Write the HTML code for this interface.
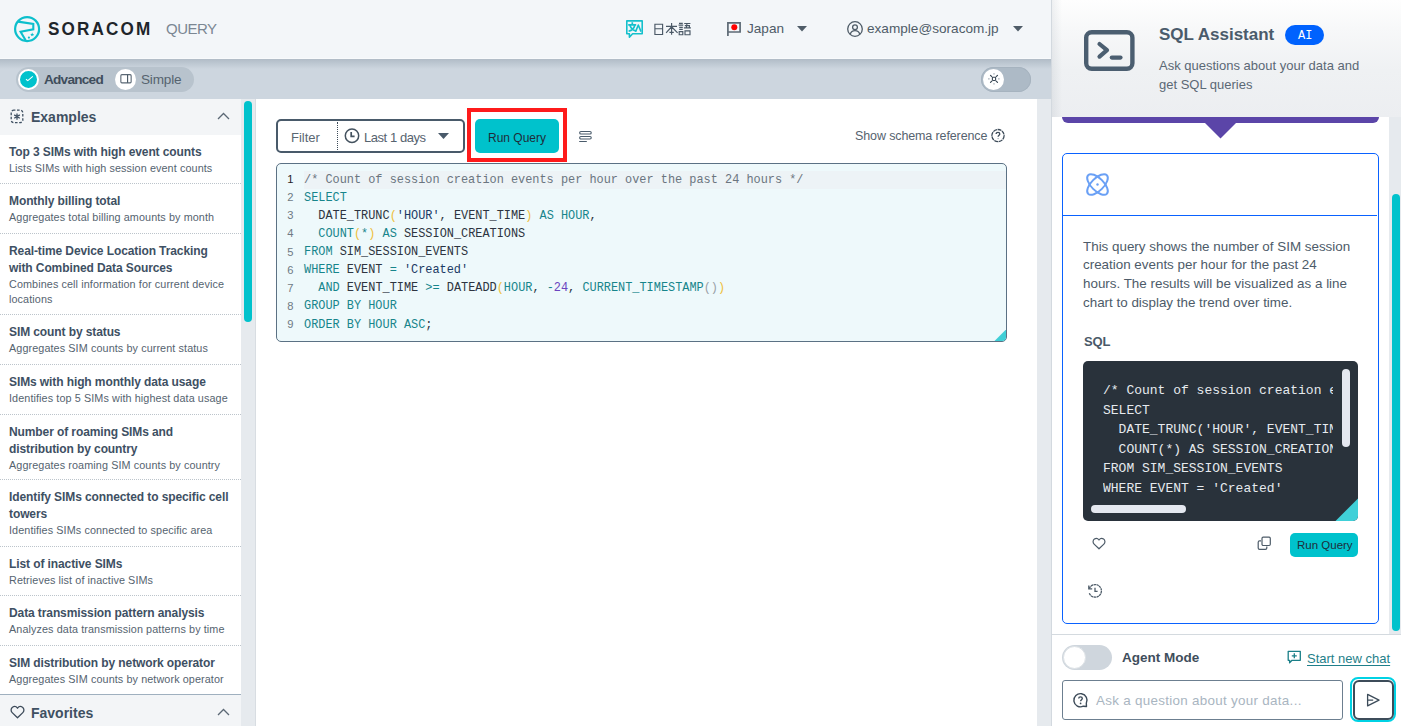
<!DOCTYPE html>
<html><head><meta charset="utf-8">
<style>
*{box-sizing:border-box;margin:0;padding:0}
html,body{width:1401px;height:726px;overflow:hidden;background:#fff;font-family:"Liberation Sans",sans-serif;color:#3d4b59}
.abs{position:absolute}
.nw{white-space:nowrap}
#header{position:absolute;left:0;top:0;width:1051px;height:59px;background:#f3f6f9;z-index:3;border-bottom:1px solid #f8fafc}
#toolbar{position:absolute;left:0;top:58px;width:1051px;height:41px;background:#cdd6df;z-index:2}
#sidebar{position:absolute;left:0;top:99px;width:241px;height:627px;background:#fff;overflow:hidden}
#gutter{position:absolute;left:241px;top:99px;width:14px;height:627px;background:#e6eaee}
#main{position:absolute;left:255px;top:99px;width:782px;height:627px;background:#fff}
#strip{position:absolute;left:1037px;top:99px;width:14px;height:627px;background:#e6eaee}
#right{position:absolute;left:1051px;top:0;width:350px;height:726px;background:#fff;z-index:4;}
.sechead{position:absolute;left:0;width:241px;background:#f3f5f7}
.sechead .t{position:absolute;left:31px;font-size:14px;font-weight:bold;color:#3f5062;line-height:16px}
.item{position:absolute;left:0;width:241px;padding:8.5px 0 0 9px;border-bottom:1px dotted #bcc4cb}
.item .ti{font-size:12px;font-weight:bold;color:#3e5063;white-space:nowrap;line-height:17px;letter-spacing:-0.1px}
.item .de{font-size:10.8px;color:#55636f;white-space:nowrap;line-height:15px;letter-spacing:0.1px}
.mono{font-family:"Liberation Mono",monospace}
#code{position:absolute;left:276px;top:163px;width:731px;height:179px;background:#eef9fb;border:1px solid #5b7184;border-radius:5px;overflow:hidden}
#code .ln{position:absolute;left:0;width:16.5px;text-align:right;font-family:"Liberation Sans",sans-serif;font-size:11.2px;color:#6f7a84}
#code .cl{position:absolute;left:27px;font-family:"Liberation Mono",monospace;font-size:11.9px;color:#2d3440;white-space:pre}
.k{color:#17858b}.s{color:#1b3a64}.p{color:#efc03a}.n{color:#6b45c0}.g{color:#9aa1a8}.c{color:#6b757f}
#dark{position:absolute;left:32px;top:361px;width:275px;height:160px;background:#29323b;border-radius:5px;overflow:hidden}
#dark pre{position:absolute;left:20px;top:20px;width:230px;overflow:hidden;font-family:"Liberation Mono",monospace;font-size:13px;line-height:19.5px;color:#e6eaee}
</style></head>
<body>

<div id="header">
  <svg class="abs" style="left:12px;top:14px" width="30" height="30" viewBox="0 0 30 30">
    <circle cx="15.1" cy="15.1" r="12" fill="none" stroke="#0cbfcc" stroke-width="2.2"/>
    <path d="M6 7.6 L21.3 9.9 V15.3 L8.6 17.8 L13.6 26.2" fill="none" stroke="#0cbfcc" stroke-width="2.1" stroke-linejoin="miter"/>
    <path d="M20.2 18.6 l.6 1.3 1.4 .1 -1.1 .9 .4 1.4 -1.3 -.8 -1.3 .8 .4 -1.4 -1.1 -.9 1.4 -.1z" fill="#0cbfcc"/>
    <circle cx="16.9" cy="23.6" r="1.1" fill="#0cbfcc"/>
  </svg>
  <div class="abs nw" style="left:48px;top:18px;font-size:19px;font-weight:bold;letter-spacing:2.4px;color:#1e252b;transform:scaleX(0.9);transform-origin:0 0">SORACOM</div>
  <div class="abs nw" style="left:166px;top:20px;font-size:15px;color:#7b8793;letter-spacing:-0.5px">QUERY</div>

  <!-- translate icon -->
  <svg class="abs" style="left:625px;top:19px" width="20" height="20" viewBox="0 0 20 20">
    <path d="M1.8 1.9 H17.2 V14.8 H7.6 L4.4 18.2 V14.8 H1.8 Z" fill="none" stroke="#14c0cc" stroke-width="1.6" stroke-linejoin="round"/>
    <path d="M7.3 3.2 V5.6 M3.2 5.8 H11.2 M9.8 6.2 C9 9.6 6.6 11.4 3.6 12.2 M5 6.6 C6 9.6 8.4 11.4 11.2 12.1" fill="none" stroke="#14c0cc" stroke-width="1.7"/>
    <path d="M10.6 12.6 L13.3 6 L16 12.6" fill="none" stroke="#14c0cc" stroke-width="1.6" stroke-linejoin="round"/>
  </svg>
  <svg class="abs" style="left:653px;top:22px" width="39" height="14" viewBox="0 0 39 14">
    <g fill="none" stroke="#4a5866" stroke-width="1.15">
      <path d="M1.9 2.2 H9.6 V12.5 H1.9 Z M1.9 6.7 H9.6"/>
      <path d="M13 4.4 H24 M18.6 1.1 V12.7 M18.4 5 L13.1 10.8 M18.8 5 L24.6 10.8 M16.4 10.3 H20.8"/>
      <path d="M26 1.4 H29.8 M25.6 3.1 H30.2 M26.2 5.3 H29.8 M26.2 7.4 H29.8 M26.2 9.6 H29.8 V12.7 H26.2 Z"/>
      <path d="M31.2 1.5 H37.4 M34 1.5 L33.3 5.8 M31.8 3.6 H36.4 V5.8 M30.9 5.8 H37.9 M32 8.9 H37 V12.7 H32 Z"/>
    </g>
  </svg>
  <!-- flag -->
  <svg class="abs" style="left:726px;top:21px" width="16" height="17" viewBox="0 0 16 17">
    <path d="M1.9 15 V1.8 H14.1 V11 H1.9" fill="none" stroke="#5d6a76" stroke-width="1.7"/>
    <circle cx="8.3" cy="6.2" r="3" fill="#f00"/>
  </svg>
  <div class="abs nw" style="left:747px;top:21px;font-size:13.6px;color:#4f5c68">Japan</div>
  <svg class="abs" style="left:796px;top:26px" width="12" height="6" viewBox="0 0 12 6"><path d="M1 0 H11 L6 5.6Z" fill="#4f5c68"/></svg>
  <!-- user -->
  <svg class="abs" style="left:846px;top:20px" width="18" height="18" viewBox="0 0 18 18">
    <circle cx="9" cy="9" r="7.3" fill="none" stroke="#4f5c68" stroke-width="1.3"/>
    <circle cx="9" cy="7.2" r="2.4" fill="none" stroke="#4f5c68" stroke-width="1.3"/>
    <path d="M4.2 14.3 C5 11.6 6.7 10.6 9 10.6 C11.3 10.6 13 11.6 13.8 14.3" fill="none" stroke="#4f5c68" stroke-width="1.3"/>
  </svg>
  <div class="abs nw" style="left:867px;top:21px;font-size:13.6px;color:#4f5c68">example@soracom.jp</div>
  <svg class="abs" style="left:1012px;top:26px" width="12" height="6" viewBox="0 0 12 6"><path d="M1 0 H11 L6 5.6Z" fill="#4f5c68"/></svg>
</div>

<div id="toolbar">
  <div class="abs" style="left:0;top:1px;width:1051px;height:10px;background:linear-gradient(#b1bcc7,#cdd6df)"></div>
  <div class="abs" style="left:16px;top:9px;width:178px;height:25px;border-radius:13px;background:#b8c3cd"></div>
  <div class="abs" style="left:18px;top:10.5px;width:21px;height:21px;border-radius:50%;background:#00c2cc;border:2px solid #fff"></div>
  <svg class="abs" style="left:22px;top:15px" width="13" height="13" viewBox="0 0 13 13"><path d="M4 6.3 L5.8 7.6 L10.8 3.4" fill="none" stroke="#fff" stroke-width="1.1"/></svg>
  <div class="abs nw" style="left:44px;top:14px;font-size:13.6px;font-weight:bold;color:#3f4e5c;letter-spacing:-0.75px">Advanced</div>
  <div class="abs" style="left:115px;top:11px;width:21px;height:21px;border-radius:50%;background:#fff"></div>
  <svg class="abs" style="left:118px;top:14px" width="15" height="15" viewBox="0 0 15 15"><rect x="2.85" y="2.65" width="10.3" height="8.2" rx="1" fill="none" stroke="#5b6875" stroke-width="1.1"/><path d="M9.6 2.65 V10.85" stroke="#44525f" stroke-width="1.1"/></svg>
  <div class="abs nw" style="left:141px;top:14px;font-size:13.6px;color:#56636f;letter-spacing:-0.2px">Simple</div>
  <!-- dark mode toggle -->
  <div class="abs" style="left:981px;top:9px;width:50px;height:25px;border-radius:13px;background:#adbac6;box-shadow:inset 0 0 0 1px #a6b3bf"></div>
  <div class="abs" style="left:983px;top:11px;width:21px;height:21px;border-radius:50%;background:#fff"></div>
  <svg class="abs" style="left:986px;top:13px" width="16" height="16" viewBox="0 0 16 16"><g fill="none" stroke="#3c4a57" stroke-width="1.1"><rect x="6.4" y="6.3" width="3.2" height="3.2" rx=".8"/></g><g fill="none" stroke="#3c4a57" stroke-width="1.2" stroke-linecap="round"><path d="M4.5 4.4L5.8 5.7M11.5 4.4L10.2 5.7M4.5 11.4L5.8 10.1M11.5 11.4L10.2 10.1"/></g><g fill="none" stroke="#8a96a1" stroke-width="1.1"><path d="M8 2.3V3.5M8 12.3V13.5M2.3 7.9H3.5M12.3 7.9H13.5"/></g></svg>
</div>

<div id="sidebar">
  <div class="sechead" style="top:0;height:36px">
    <svg class="abs" style="left:10px;top:10px" width="14" height="15" viewBox="0 0 14 15"><rect x="1.2" y="1.2" width="11.6" height="12.4" rx="2.6" fill="none" stroke="#3f5062" stroke-width="1.3" stroke-dasharray="2.6 1.6" stroke-dashoffset="1"/><path d="M7 4.4V10.8M4.2 5.9L9.8 9.3M9.8 5.9L4.2 9.3" stroke="#3f5062" stroke-width="1.3"/></svg>
    <div class="t" style="top:10px">Examples</div>
    <svg class="abs" style="left:217px;top:13px" width="13" height="8" viewBox="0 0 13 8"><path d="M1 7 L6.5 1.5 L12 7" fill="none" stroke="#5b6875" stroke-width="1.3"/></svg>
  </div>
  <div class="item" style="top:36px;height:49px"><div class="ti">Top 3 SIMs with high event counts</div><div class="de">Lists SIMs with high session event counts</div></div>
  <div class="item" style="top:85px;height:50px"><div class="ti">Monthly billing total</div><div class="de">Aggregates total billing amounts by month</div></div>
  <div class="item" style="top:135px;height:81px"><div class="ti">Real-time Device Location Tracking<br>with Combined Data Sources</div><div class="de">Combines cell information for current device<br>locations</div></div>
  <div class="item" style="top:216px;height:50px"><div class="ti">SIM count by status</div><div class="de">Aggregates SIM counts by current status</div></div>
  <div class="item" style="top:266px;height:50px"><div class="ti">SIMs with high monthly data usage</div><div class="de">Identifies top 5 SIMs with highest data usage</div></div>
  <div class="item" style="top:316px;height:65px"><div class="ti">Number of roaming SIMs and<br>distribution by country</div><div class="de">Aggregates roaming SIM counts by country</div></div>
  <div class="item" style="top:381px;height:67px"><div class="ti">Identify SIMs connected to specific cell<br>towers</div><div class="de">Identifies SIMs connected to specific area</div></div>
  <div class="item" style="top:448px;height:49px"><div class="ti">List of inactive SIMs</div><div class="de">Retrieves list of inactive SIMs</div></div>
  <div class="item" style="top:497px;height:50px"><div class="ti">Data transmission pattern analysis</div><div class="de">Analyzes data transmission patterns by time</div></div>
  <div class="item" style="top:547px;height:49px;border-bottom:1px solid #9fb0bf"><div class="ti">SIM distribution by network operator</div><div class="de">Aggregates SIM counts by network operator</div></div>
  <div class="sechead" style="top:596px;height:31px">
    <svg class="abs" style="left:10px;top:10px" width="15" height="14" viewBox="0 0 15 14"><path d="M7.5 12.8 L2.2 7.6 C0.6 6 0.8 3.4 2.5 2.2 C4.1 1.1 6.3 1.5 7.5 3.2 C8.7 1.5 10.9 1.1 12.5 2.2 C14.2 3.4 14.4 6 12.8 7.6 Z" fill="none" stroke="#3d4b5a" stroke-width="1.3" stroke-linejoin="round"/></svg>
    <div class="t" style="top:10px">Favorites</div>
    <svg class="abs" style="left:217px;top:13px" width="13" height="8" viewBox="0 0 13 8"><path d="M1 7 L6.5 1.5 L12 7" fill="none" stroke="#5b6875" stroke-width="1.3"/></svg>
  </div>
</div>
<div id="gutter"><div class="abs" style="left:3px;top:2px;width:8px;height:221px;border-radius:4px;background:#00c2cc"></div></div>

<div id="main">
  <div class="abs" style="left:0;top:0;width:1px;height:627px;background:#d8dde2"></div>
  <!-- filter group -->
  <div class="abs" style="left:21px;top:20px;width:189px;height:34px;border:2px solid #495a6a;border-radius:5px"></div>
  <div class="abs nw" style="left:36px;top:31px;font-size:13px;color:#5a6773">Filter</div>
  <div class="abs" style="left:82px;top:23px;width:0;height:28px;border-left:1px dotted #3d4b59"></div>
  <svg class="abs" style="left:89px;top:29px" width="16" height="16" viewBox="0 0 16 16"><circle cx="8" cy="7.8" r="6.7" fill="none" stroke="#44525f" stroke-width="1.5"/><path d="M7.2 3.9 V8.4 H10.6" fill="none" stroke="#44525f" stroke-width="1.7"/></svg>
  <div class="abs nw" style="left:109px;top:31px;font-size:13px;color:#56636f;letter-spacing:-0.45px">Last 1 days</div>
  <svg class="abs" style="left:183px;top:34px" width="11" height="6" viewBox="0 0 11 6"><path d="M0 0 H11 L5.5 6Z" fill="#495a6a"/></svg>
  <!-- red highlight -->
  <div class="abs" style="left:212px;top:9px;width:100px;height:54px;border:4px solid #fe1b1b"></div>
  <div class="abs" style="left:220px;top:20px;width:84px;height:34px;border-radius:5px;background:#00c2cc"></div>
  <div class="abs nw" style="left:233px;top:32px;font-size:12px;color:#1f2d3a">Run Query</div>
  <svg class="abs" style="left:323px;top:31px" width="15" height="14" viewBox="0 0 15 14"><g fill="none" stroke="#4a5b6b" stroke-width="1.1"><rect x="1.65" y="1.45" width="11.6" height="2.6" rx="1.3"/><rect x="1.65" y="6.45" width="11.6" height="2.5" rx="1.25"/></g><path d="M1.6 11.45 H8.4" stroke="#4a5b6b" stroke-width="1.1" stroke-linecap="round"/></svg>
  <div class="abs nw" style="left:600px;top:30px;font-size:12.5px;color:#56636f;letter-spacing:-0.12px">Show schema reference</div>
  <svg class="abs" style="left:735px;top:29px" width="16" height="16" viewBox="0 0 16 16"><circle cx="8" cy="7.6" r="6.1" fill="none" stroke="#3d4b59" stroke-width="1.3" stroke-dasharray="4 .6"/><path d="M6.1 6.1 C6.1 5 6.9 4.4 8 4.4 C9.1 4.4 9.8 5.1 9.8 6 C9.8 7.1 8.1 7.3 8.1 8.8" fill="none" stroke="#3d4b59" stroke-width="1.3"/><circle cx="8.1" cy="10.6" r=".6" fill="#8592a0"/></svg>
</div>
<div id="code">
  <div class="abs" style="left:27px;top:7px;width:703px;height:17.5px;background:#edf3f6"></div>
  <div class="ln" style="top:9.0px;color:#1f2328">1</div>
  <div class="ln" style="top:27.1px">2</div>
  <div class="ln" style="top:45.2px">3</div>
  <div class="ln" style="top:63.4px">4</div>
  <div class="ln" style="top:81.5px">5</div>
  <div class="ln" style="top:99.6px">6</div>
  <div class="ln" style="top:117.7px">7</div>
  <div class="ln" style="top:135.8px">8</div>
  <div class="ln" style="top:154.0px">9</div>
  <div class="cl" style="top:8.5px"><span class="c">/* Count of session creation events per hour over the past 24 hours */</span></div>
  <div class="cl" style="top:26.6px"><span class="k">SELECT</span></div>
  <div class="cl" style="top:44.7px">  DATE_TRUNC<span class="p">(</span><span class="s">'HOUR'</span>, EVENT_TIME<span class="p">)</span> <span class="k">AS</span> <span class="k">HOUR</span>,</div>
  <div class="cl" style="top:62.9px">  <span class="k">COUNT</span><span class="p">(</span><span class="k">*</span><span class="p">)</span> <span class="k">AS</span> SESSION_CREATIONS</div>
  <div class="cl" style="top:81.0px"><span class="k">FROM</span> SIM_SESSION_EVENTS</div>
  <div class="cl" style="top:99.1px"><span class="k">WHERE</span> EVENT <span class="k">=</span> <span class="s">'Created'</span></div>
  <div class="cl" style="top:117.2px">  <span class="k">AND</span> EVENT_TIME <span class="k">&gt;=</span> DATEADD<span class="p">(</span><span class="k">HOUR</span>, <span class="k">-</span><span class="n">24</span>, <span class="k">CURRENT_TIMESTAMP</span><span class="g">()</span><span class="p">)</span></div>
  <div class="cl" style="top:135.3px"><span class="k">GROUP BY HOUR</span></div>
  <div class="cl" style="top:153.5px"><span class="k">ORDER BY HOUR ASC</span>;</div>
  <svg class="abs" style="right:-1px;bottom:-1px" width="15" height="15" viewBox="0 0 15 15"><path d="M15 1.5 V15 H1.5 Z" fill="#3fcfd6"/></svg>
</div>
<div id="strip"></div>
<div id="right">
  <div class="abs" style="left:0;top:0;width:1px;height:726px;background:#d3d9df;z-index:5"></div>
  <div class="abs" style="left:0;top:0;width:350px;height:117px;background:linear-gradient(#fefefe 0%,#f7f8f9 25%,#eff1f3 60%,#eceef1 100%)"></div>
  <div class="abs" style="left:1px;top:0;width:10px;height:117px;background:linear-gradient(to right,rgba(40,60,80,.07),rgba(40,60,80,0))"></div>
  <svg class="abs" style="left:32px;top:29px" width="53" height="43" viewBox="0 0 53 43"><rect x="3.2" y="3.2" width="46.2" height="36.6" rx="5.5" fill="none" stroke="#4b5e70" stroke-width="4.4"/><path d="M16.5 15 L24 21.2 L16.5 27.6" fill="none" stroke="#4b5e70" stroke-width="4.2" stroke-linecap="round" stroke-linejoin="round"/><path d="M28.8 28.6 H37.5" fill="none" stroke="#4b5e70" stroke-width="4.2" stroke-linecap="round"/></svg>
  <div class="abs nw" style="left:108px;top:25px;font-size:17px;font-weight:bold;color:#4a5b6b">SQL Assistant</div>
  <div class="abs" style="left:234px;top:25px;width:39px;height:20px;border-radius:10px;background:#0062fe"></div>
  <div class="abs nw mono" style="left:247px;top:28.5px;font-size:12px;color:#fff">AI</div>
  <div class="abs nw" style="left:108px;top:57px;font-size:13px;line-height:18.5px;color:#5b6875">Ask questions about your data and<br>get SQL queries</div>
  <!-- scroll track -->
  <div class="abs" style="left:338px;top:117px;width:12px;height:517px;background:#e6eaee"></div>
  <div class="abs" style="left:341px;top:194px;width:8px;height:437px;border-radius:4px;background:#00c2cc"></div>
  <!-- purple bar -->
  <div class="abs" style="left:10.6px;top:117px;width:317px;height:6px;background:#5b45a8;border-radius:0 0 6px 6px"></div>
  <svg class="abs" style="left:153px;top:122px" width="33" height="17" viewBox="0 0 33 17"><path d="M0 0 H33 L16.5 16.5Z" fill="#5b45a8"/></svg>
  <!-- card -->
  <div class="abs" style="left:11px;top:153px;width:317px;height:471px;border:1.5px solid #0a62ff;border-radius:5px">
    <div class="abs" style="left:0;top:61px;width:314px;height:0;border-top:1.5px solid #0a62ff"></div>
  </div>
  <svg class="abs" style="left:33px;top:171px" width="27" height="27" viewBox="0 0 27 27"><g fill="none" stroke="#6aa0f5" stroke-width="2"><ellipse cx="13.5" cy="13.5" rx="13.2" ry="6.2" transform="rotate(45 13.5 13.5)"/><ellipse cx="13.5" cy="13.5" rx="13.2" ry="6.2" transform="rotate(-45 13.5 13.5)"/></g><circle cx="13.5" cy="13.5" r="1.2" fill="#6aa0f5"/></svg>
  <div class="abs nw" style="left:32px;top:237.5px;font-size:13.4px;line-height:18.7px;color:#4d5b69">This query shows the number of SIM session<br>creation events per hour for the past 24<br>hours. The results will be visualized as a line<br>chart to display the trend over time.</div>
  <div class="abs nw" style="left:33px;top:334px;font-size:13px;font-weight:bold;letter-spacing:-0.2px;color:#4a5968">SQL</div>
  <div id="dark">
<pre>/* Count of session creation events per hour over the past 24 hours */
SELECT
  DATE_TRUNC('HOUR', EVENT_TIME) AS HOUR,
  COUNT(*) AS SESSION_CREATIONS
FROM SIM_SESSION_EVENTS
WHERE EVENT = 'Created'</pre>
    <div class="abs" style="left:259px;top:8px;width:8px;height:78px;border-radius:4px;background:#e4e8f0"></div>
    <div class="abs" style="left:8px;top:144px;width:95px;height:8px;border-radius:4px;background:#e4e8f0"></div>
    <svg class="abs" style="right:0;bottom:0" width="23" height="23" viewBox="0 0 23 23"><path d="M23 0.5 V23 H0.5 Z" fill="#40d0d8"/></svg>
  </div>
  <svg class="abs" style="left:41px;top:537px" width="14" height="13" viewBox="0 0 14 13"><path d="M7 11.8 L2.1 7.1 C0.6 5.6 0.8 3.2 2.4 2.1 C3.9 1.1 5.9 1.5 7 3 C8.1 1.5 10.1 1.1 11.6 2.1 C13.2 3.2 13.4 5.6 11.9 7.1 Z" fill="none" stroke="#4d5b68" stroke-width="1.2" stroke-linejoin="round"/></svg>
  <svg class="abs" style="left:206px;top:536px" width="15" height="15" viewBox="0 0 15 15"><g fill="none" stroke="#4d5b68" stroke-width="1.2"><rect x="5" y="1.2" width="8.3" height="8.3" rx="1.2"/><path d="M4 4.8 H2.6 C1.8 4.8 1.2 5.4 1.2 6.2 V12 C1.2 12.8 1.8 13.4 2.6 13.4 H8.4 C9.2 13.4 9.8 12.8 9.8 12 V10.6"/></g></svg>
  <div class="abs" style="left:239px;top:533px;width:68px;height:24px;border-radius:5px;background:#00c2cc"></div>
  <div class="abs nw" style="left:246px;top:539px;font-size:11.5px;color:#1f2d3a">Run Query</div>
  <svg class="abs" style="left:36px;top:583px" width="16" height="16" viewBox="0 0 16 16"><g fill="none" stroke="#4d5b68" stroke-width="1.3"><path d="M2.3 5.5 A6.3 6.3 0 1 1 2.2 10" stroke-dasharray="2.4 .5"/><path d="M1.8 2.4 V5.8 H5.2"/><path d="M8 4.8 V8.4 H10.6"/></g></svg>
  <!-- bottom -->
  <div class="abs" style="left:0;top:634px;width:350px;height:1px;background:#d4dadf"></div>
  <div class="abs" style="left:11px;top:645px;width:50px;height:25px;border-radius:13px;background:#cfd6dd"></div>
  <div class="abs" style="left:12px;top:646px;width:23px;height:23px;border-radius:50%;background:#fff;border:1px solid #dde2e6"></div>
  <div class="abs nw" style="left:71px;top:650px;font-size:13.5px;font-weight:bold;color:#3f4e5c">Agent Mode</div>
  <svg class="abs" style="left:236px;top:650px" width="15" height="15" viewBox="0 0 15 15"><g fill="none" stroke="#1a7f88" stroke-width="1.3"><path d="M1.2 1.3 H13.3 V10.3 H5 L2.6 12.8 V10.3 H1.2 Z" stroke-linejoin="round"/><path d="M7.3 3.3 V8.3 M4.8 5.8 H9.8"/></g></svg>
  <div class="abs nw" style="left:256px;top:651px;font-size:13px;color:#1f7f8a;text-decoration:underline;text-underline-offset:2px">Start new chat</div>
  <div class="abs" style="left:11px;top:680px;width:281px;height:40px;border:1.5px solid #6c7f90;border-radius:3px"></div>
  <svg class="abs" style="left:21px;top:692px" width="17" height="17" viewBox="0 0 17 17"><path d="M14.3 11.3 A6.6 6.6 0 1 0 11.3 14.2 L14.5 14.5 Z" fill="none" stroke="#3d4b59" stroke-width="1.4" stroke-linejoin="round"/><path d="M6.7 6.6 C6.7 5.5 7.5 4.9 8.5 4.9 C9.5 4.9 10.3 5.6 10.3 6.5 C10.3 7.6 8.6 7.8 8.6 9.3" fill="none" stroke="#3d4b59" stroke-width="1.4"/><circle cx="8.6" cy="11.4" r=".85" fill="#3d4b59"/></svg>
  <div class="abs nw" style="left:45px;top:693px;font-size:13.4px;color:#a9b5c1;letter-spacing:0.3px">Ask a question about your data...</div>
  <div class="abs" style="left:299px;top:677px;width:46px;height:45px;border:2px solid #00d2e4;border-radius:8px"></div>
  <div class="abs" style="left:301.5px;top:679.5px;width:41px;height:40px;border:2px solid #3d4c5a;border-radius:6px;background:#fff"></div>
  <svg class="abs" style="left:314px;top:692px" width="16" height="16" viewBox="0 0 16 16"><path d="M2.6 2.4 L14 8.2 L2.6 13.9 Z M2.6 8.1 H8.2" fill="none" stroke="#3d4c5a" stroke-width="1.3" stroke-linejoin="round"/></svg>
</div>

</body></html>
